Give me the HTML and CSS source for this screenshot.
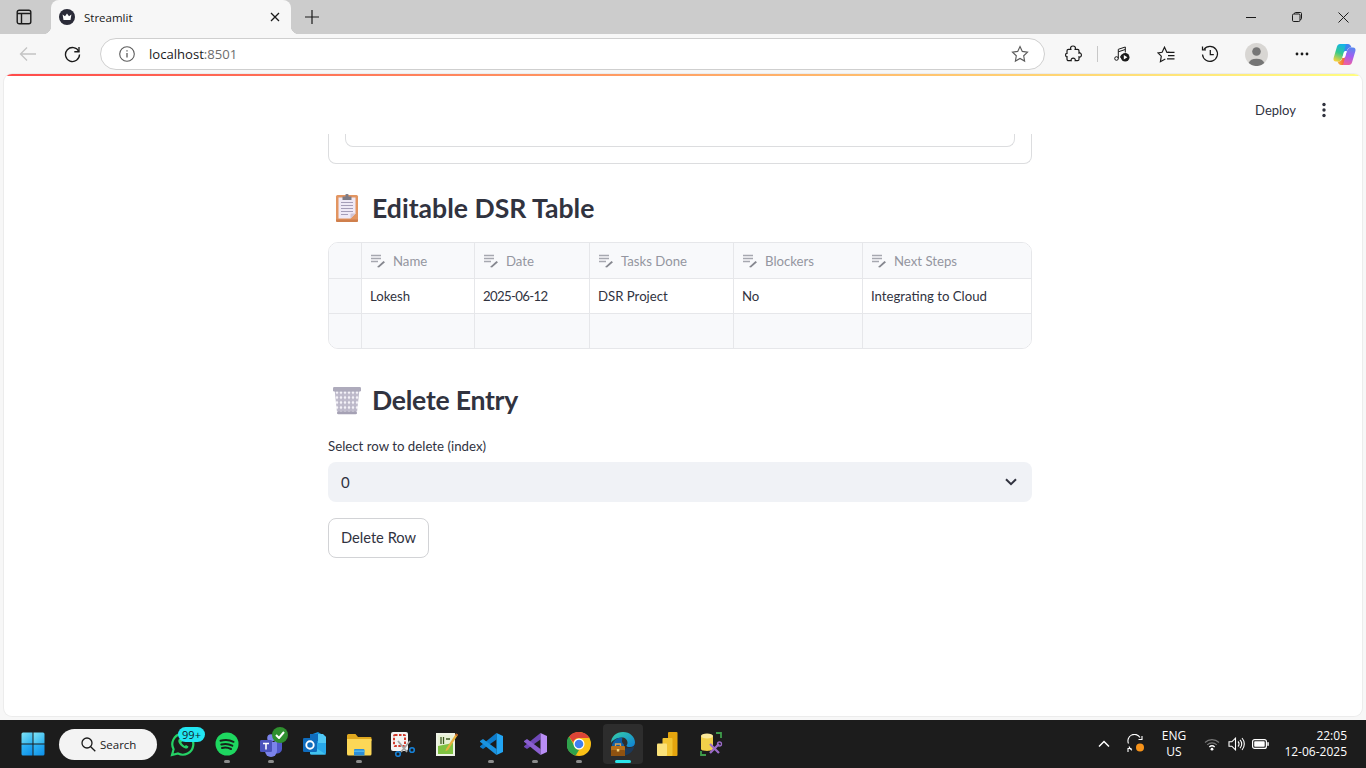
FILE: index.html
```html
<!DOCTYPE html>
<html lang="en">
<head>
<meta charset="utf-8">
<title>Streamlit</title>
<link rel="stylesheet" href="styles.css">
</head>
<body>
<svg class="defs" width="0" height="0" aria-hidden="true">
  <defs>
    <symbol id="edit" viewBox="0 0 16 14">
      <path d="M1 1.500h10M1 4.500h10M1 7.500h7" stroke="#a6a8b0" stroke-width="1.600" fill="none"/>
      <path d="M7 13l6.500-6 1.500 1.300L9 13.600z" fill="#85878f"/>
    </symbol>
  </defs>
</svg>
<div class="tabstrip">
  <div class="slot sidebar-slot">
    <svg width="16" height="16" viewBox="0 0 16 16" fill="none" stroke="#1a1a1a" stroke-width="1.400"><rect x="1.200" y="1.200" width="13.600" height="13.600" rx="2"/><path d="M1.200 4.500h13.600M5.500 4.500v10.300"/></svg>
  </div>
  <div class="tab">
    <svg class="favicon" width="16" height="16" viewBox="0 0 16 16"><circle cx="8" cy="8" r="8" fill="#2a2b38"/><path d="M3.600 5.600l2.400 1.700L8 4.400l2 2.900 2.400-1.700-.9 5.400h-7z" fill="#fff"/></svg>
    <span class="tab-title">Streamlit</span>
    <svg class="tab-close" width="10" height="10" viewBox="0 0 10 10" stroke="#1a1a1a" stroke-width="1.300"><path d="M1 1l8 8M9 1l-8 8"/></svg>
  </div>
  <div class="slot newtab">
    <svg width="14" height="14" viewBox="0 0 14 14" stroke="#1a1a1a" stroke-width="1.200"><path d="M7 0v14M0 7h14"/></svg>
  </div>
  <div class="winctl">
    <div class="ctl"><svg width="10" height="10" viewBox="0 0 10 10" stroke="#1a1a1a"><path d="M0 5.500h10"/></svg></div>
    <div class="ctl"><svg width="10" height="10" viewBox="0 0 10 10" fill="none" stroke="#1a1a1a"><rect x=".5" y="2" width="7.500" height="7.500" rx="1.200"/><path d="M2.500 2V1.500A1 1 0 0 1 3.500.5h5a1 1 0 0 1 1 1v5a1 1 0 0 1-1 1H8"/></svg></div>
    <div class="ctl"><svg width="11" height="11" viewBox="0 0 11 11" stroke="#1a1a1a"><path d="M.5.5l10 10M10.500.5l-10 10"/></svg></div>
  </div>
</div>

<div class="toolbar">
  <div class="slot">
    <svg width="18" height="16" viewBox="0 0 18 16" fill="none" stroke="#c4c4c4" stroke-width="1.300"><path d="M17 8H1.500M8 1.500L1.500 8 8 14.500"/></svg>
  </div>
  <div class="slot">
    <svg width="17" height="17" viewBox="0 0 17 17" fill="none" stroke="#1a1a1a" stroke-width="1.350"><path d="M14.800 5.500A7 7 0 1 0 15.500 8.500"/><path d="M15 1v4.700h-4.700"/></svg>
  </div>
  <div class="urlbar">
    <svg class="info" width="16" height="16" viewBox="0 0 16 16" fill="none" stroke="#5c5c5c" stroke-width="1.100"><circle cx="8" cy="8" r="7.300"/><path d="M8 7v4.600M8 4.200v1.300" stroke-width="1.300"/></svg>
    <span class="url-host">localhost</span><span class="url-port">:8501</span>
    <svg class="star" width="18" height="18" viewBox="0 0 18 18" fill="none" stroke="#5c5c5c" stroke-width="1.150"><path d="M9 1.500l2.300 4.900 5.200.7-3.800 3.700.9 5.300L9 13.500l-4.600 2.600.9-5.300L1.500 7.100l5.200-.7z"/></svg>
  </div>
  <div class="slot ext-slot">
    <svg width="17" height="18" viewBox="0 0 17 18" fill="none" stroke="#1a1a1a" stroke-width="1.200"><path d="M5.800 4.300C5 2.400 6.300 1 8 1s3 1.400 2.200 3.300h2.300c.8 0 1.500.7 1.500 1.500v2.300c1.500-.5 2.400.6 2.400 1.900s-.9 2.400-2.400 1.900v2.300c0 .8-.7 1.500-1.500 1.500h-2.300c.5-1.500-.6-2.600-2-2.600s-2.500 1.100-2 2.600H3.500c-.8 0-1.500-.7-1.500-1.500v-2.500c-.8.200-1.400-.6-1.400-1.700s.6-1.900 1.400-1.700V5.800c0-.8.700-1.500 1.500-1.500z"/></svg>
  </div>
  <div class="tool-sep"></div>
  <div class="slot">
    <svg width="16" height="16" viewBox="0 0 16 16" fill="none" stroke="#1a1a1a" stroke-width="1"><circle cx="2.500" cy="12.500" r="1.800"/><circle cx="8" cy="10.800" r="1.400"/><path d="M4.300 12.500V3.300l7-2.300v5.500M4.300 5.800l7-2.300"/><circle cx="11.200" cy="11.200" r="4.300" fill="#1a1a1a" stroke="none"/><path d="M9.800 9l3.600 2.200-3.600 2.200z" fill="#fff" stroke="none"/></svg>
  </div>
  <div class="slot">
    <svg width="18" height="17" viewBox="0 0 18 17" fill="none" stroke="#1a1a1a" stroke-width="1.150"><path d="M12.500 6.300H9.900L7.500 1.200 5.100 6.300 1 7l3.300 3.200-.9 5.600 4.900-2.700"/><path d="M11 6.300h6.500M11 9.600h6.500M10 12.900h7.500"/></svg>
  </div>
  <div class="slot">
    <svg width="18" height="18" viewBox="0 0 18 18" fill="none" stroke="#1a1a1a" stroke-width="1.250"><path d="M3 4.300A7.500 7.500 0 1 1 1.500 9.500"/><path d="M1.500 1.500v3.300h3.400M9.300 5v4.700h3.500"/></svg>
  </div>
  <div class="slot profile-slot">
    <svg width="23" height="23" viewBox="0 0 23 23"><circle cx="11.500" cy="11.500" r="11.500" fill="#d8d6d3"/><circle cx="11.500" cy="8.500" r="4.300" fill="#767676"/><path d="M3.700 20a8 5.500 0 0 1 15.600 0 11.500 11.500 0 0 1-15.600 0z" fill="#767676"/></svg>
  </div>
  <div class="slot profile-slot">
    <svg width="14" height="4" viewBox="0 0 14 4" fill="#1a1a1a"><circle cx="2" cy="2" r="1.400"/><circle cx="7" cy="2" r="1.400"/><circle cx="12" cy="2" r="1.400"/></svg>
  </div>
  <div class="slot copilot-slot">
    <svg width="23" height="23" viewBox="0 0 23 23">
      <defs>
        <linearGradient id="cpa" x1="0.600" y1="0" x2="0.300" y2="1"><stop offset="0" stop-color="#14b4e8"/><stop offset=".5" stop-color="#34c98c"/><stop offset="1" stop-color="#f4d33c"/></linearGradient>
        <linearGradient id="cpb" x1="0.600" y1="0" x2="0.400" y2="1"><stop offset="0" stop-color="#5a86f0"/><stop offset=".5" stop-color="#a45cf0"/><stop offset="1" stop-color="#f2609c"/></linearGradient>
        <linearGradient id="cpc" x1="0" y1="0" x2="1" y2="0"><stop offset="0" stop-color="#f7c234"/><stop offset=".5" stop-color="#f4703a"/><stop offset="1" stop-color="#ee4a78"/></linearGradient>
        <linearGradient id="cpd" x1="0" y1="0" x2="1" y2="0"><stop offset="0" stop-color="#1499ee"/><stop offset="1" stop-color="#5a78f0"/></linearGradient>
      </defs>
      <path d="M7 1h8c1.500 0 2.500 1 3 2.500l.7 1h-1.200c-2 0-3.500 1.500-4 4.500H8z" fill="url(#cpd)"/>
      <path d="M16 22H8c-1.500 0-2.500-1-3-2.500l-.7-1h1.200c2 0 3.500-1.500 4-4.500h5z" fill="url(#cpc)"/>
      <path d="M7 1h6L9.500 14c-.6 1.800-1.900 4.500-4 4.500H3c-2 0-3-1.600-2.400-3.500L4 3.500C4.500 2 5.500 1 7 1z" fill="url(#cpa)"/>
      <path d="M16 22h-6l3.500-13c.6-1.800 1.900-4.500 4-4.500H20c2 0 3 1.600 2.400 3.500L19 19.500c-.5 1.500-1.500 2.500-3 2.500z" fill="url(#cpb)"/>
      <path d="M11.600 8h2.300L11.500 15H9.200z" fill="#fff"/>
    </svg>
  </div>
</div>

<div class="page">
  <div class="accent"></div>
  <header class="app-header">
    <span class="deploy">Deploy</span>
    <svg class="kebab" width="6" height="16" viewBox="0 0 6 16" fill="#31333f"><circle cx="3" cy="2.500" r="1.700"/><circle cx="3" cy="8" r="1.700"/><circle cx="3" cy="13.500" r="1.700"/></svg>
  </header>
  <main class="main">
    <div class="card-stub"><div class="inner-stub"></div></div>

    <h3 class="section-title first">
      <svg class="emoji" width="30" height="30" viewBox="0 0 30 30">
        <rect x="5" y="2" width="22" height="27" rx="1.500" fill="#e29561"/>
        <path d="M5 26.500h22V27.500a1.500 1.500 0 0 1-1.500 1.500h-19A1.500 1.500 0 0 1 5 27.500z" fill="#cf7f4c"/>
        <path d="M7.500 4.500h17v16l-5 5h-12z" fill="#efe9f6"/>
        <path d="M24.500 20.500l-5 5v-4c0-.6.400-1 1-1z" fill="#cfc4d6"/>
        <path d="M10 9.500h12M10 12.500h12M10 15.500h12M10 18.500h12M10 21.500h7" stroke="#a59db8" stroke-width="1"/>
        <path d="M11.500 7V3.500h3V1.500c0-.8 3-.8 3 0v2h3V7z" fill="#7d7b86"/>
      </svg>
      <span>Editable DSR Table</span>
    </h3>

    <div class="table">
      <div class="cell head idx"></div>
      <div class="cell head"><svg class="edit" width="16" height="14"><use href="#edit"/></svg>Name</div>
      <div class="cell head"><svg class="edit" width="16" height="14"><use href="#edit"/></svg>Date</div>
      <div class="cell head"><svg class="edit" width="16" height="14"><use href="#edit"/></svg>Tasks Done</div>
      <div class="cell head"><svg class="edit" width="16" height="14"><use href="#edit"/></svg>Blockers</div>
      <div class="cell head"><svg class="edit" width="16" height="14"><use href="#edit"/></svg>Next Steps</div>
      <div class="cell idx body"></div>
      <div class="cell body">Lokesh</div>
      <div class="cell body date">2025-06-12</div>
      <div class="cell body">DSR Project</div>
      <div class="cell body">No</div>
      <div class="cell body">Integrating to Cloud</div>
      <div class="cell idx last"></div>
      <div class="cell blank last"></div>
      <div class="cell blank last"></div>
      <div class="cell blank last"></div>
      <div class="cell blank last"></div>
      <div class="cell blank last"></div>
    </div>

    <h3 class="section-title second">
      <svg class="emoji" width="30" height="30" viewBox="0 0 30 30">
        <defs><pattern id="mesh" width="4" height="5" patternUnits="userSpaceOnUse"><rect width="4" height="5" fill="#bdb9ca"/><path d="M2 .5l1.300 2L2 4.500.7 2.500z" fill="#f4f2f8"/></pattern></defs>
        <path d="M3.500 4h25L26 27.500a1.500 1.500 0 0 1-1.500 1.500h-17A1.500 1.500 0 0 1 6 27.500z" fill="url(#mesh)"/>
        <rect x="2" y="2" width="28" height="4.500" rx="1.200" fill="#aeabbc"/>
        <rect x="6" y="26.500" width="20" height="2.800" rx="1.400" fill="#a5a1b4"/>
      </svg>
      <span>Delete Entry</span>
    </h3>

    <label class="field-label">Select row to delete (index)</label>
    <div class="select">
      <span>0</span>
      <svg width="12" height="8" viewBox="0 0 12 8" fill="none" stroke="#31333f" stroke-width="2"><path d="M1 1.200l5 5 5-5"/></svg>
    </div>
    <button class="btn">Delete Row</button>
  </main>
</div>

<div class="page-foot"></div>

<footer class="taskbar">
  <div class="tb-slot win-slot">
    <svg width="24" height="24" viewBox="0 0 24 24">
      <defs>
        <linearGradient id="w1" x1="0" y1="0" x2="1" y2="1"><stop offset="0" stop-color="#7fe3f5"/><stop offset="1" stop-color="#2ab0ef"/></linearGradient>
        <linearGradient id="w2" x1="0" y1="0" x2="1" y2="1"><stop offset="0" stop-color="#32b8f5"/><stop offset="1" stop-color="#0d8ee8"/></linearGradient>
      </defs>
      <path d="M.5 2A1.500 1.500 0 0 1 2 .5h9.500v11H.5z" fill="url(#w1)"/>
      <path d="M12.500.5H22A1.500 1.500 0 0 1 23.500 2v9.500h-11z" fill="url(#w1)"/>
      <path d="M.5 12.500h11v11H2A1.500 1.500 0 0 1 .5 22z" fill="url(#w2)"/>
      <path d="M12.500 12.500h11V22a1.500 1.500 0 0 1-1.500 1.500h-9.500z" fill="url(#w2)"/>
    </svg>
  </div>
  <div class="search-pill">
    <svg width="15" height="15" viewBox="0 0 15 15" fill="none" stroke="#1a1a1a" stroke-width="1.300"><circle cx="6" cy="6" r="5"/><path d="M9.700 9.700l4.600 4.600"/></svg>
    <span>Search</span>
  </div>
  <div class="tb-slot app">
    <svg width="26" height="26" viewBox="0 0 26 26" fill="none"><path d="M2 24l1.600-5.800A10.500 10.500 0 1 1 8 22.500z" stroke="#25d366" stroke-width="2.200"/><path d="M9 8c-1 1-1 3 .5 5s3.500 3.800 6 4.500c1.500.3 2.800-.5 3-2l-2.500-1.500-1.200 1c-1.500-.7-2.700-2-3.500-3.500l1-1.200L11 8z" fill="#25d366"/></svg>
    <span class="badge-count">99+</span>
  </div>
  <div class="tb-slot app running">
    <svg width="24" height="24" viewBox="0 0 24 24" fill="none"><circle cx="12" cy="12" r="11.500" fill="#1ed760"/><path d="M5.500 8.800c4.500-1.300 9-1 13 1M6.300 12.500c3.800-1 7.500-.7 11 1.200M7 16c3-.8 6-.5 9 1" stroke="#16241b" stroke-width="2" stroke-linecap="round"/></svg>
  </div>
  <div class="tb-slot app running">
    <svg width="26" height="26" viewBox="0 0 26 26"><circle cx="19" cy="8.500" r="3" fill="#7b83eb"/><circle cx="13" cy="7" r="3.800" fill="#7b83eb"/><path d="M16 11h7a1 1 0 0 1 1 1v6a4.500 4.500 0 0 1-6.500 4z" fill="#5059c9"/><path d="M7 11h12v9a6 6 0 0 1-12 0z" fill="#7b83eb"/><rect x="2" y="9" width="12" height="12" rx="1.300" fill="#4b53bc"/><path d="M5 11.800h6v1.400H8.800v5.300H7.200v-5.300H5z" fill="#fff"/></svg>
    <span class="badge-check"><svg width="10" height="8" viewBox="0 0 10 8" fill="none" stroke="#fff" stroke-width="2"><path d="M1 4l3 3 5-6"/></svg></span>
  </div>
  <div class="tb-slot app">
    <svg width="26" height="26" viewBox="0 0 26 26"><path d="M8 4l8-3 8 5v6H8z" fill="#1490df"/><path d="M8 3h8v7H8z" fill="#0f6cbd"/><path d="M16 3h5l3 3v6h-8z" fill="#50c8f5"/><path d="M8 12h16v10a1.500 1.500 0 0 1-1.500 1.500h-13A1.500 1.500 0 0 1 8 22z" fill="#28a8ea"/><path d="M8 13l16 10.500H9.500A1.500 1.500 0 0 1 8 22z" fill="#41c2ef"/><rect x="1" y="7" width="14" height="14" rx="1.300" fill="#0f6cbd"/><circle cx="8" cy="14" r="3.700" fill="none" stroke="#fff" stroke-width="1.900"/></svg>
  </div>
  <div class="tb-slot app running">
    <svg width="26" height="24" viewBox="0 0 26 24"><path d="M1 3.500A1.500 1.500 0 0 1 2.500 2h7l2.500 3h12.500A1 1 0 0 1 25.500 6v3H1z" fill="#e0a81f"/><path d="M1 7h24.500v15a1.500 1.500 0 0 1-1.500 1.500H2.500A1.500 1.500 0 0 1 1 22z" fill="#fcd757"/><path d="M8 18a1 1 0 0 1 1-1h8.500a1 1 0 0 1 1 1v5.500H8z" fill="#2b8ed8"/><rect x="8" y="18.500" width="10.500" height="1.500" fill="#4fb6ee"/></svg>
  </div>
  <div class="tb-slot app">
    <svg width="26" height="26" viewBox="0 0 26 26" fill="none"><rect x="1" y="1" width="17" height="19" rx="2" fill="#f4f4f4"/><rect x="4" y="4" width="11" height="11" rx="1" stroke="#d13a2d" stroke-width="2" stroke-dasharray="2.500 1.500"/><path d="M8 10l9 11M20 10l-9 11" stroke="#a5a5a5" stroke-width="1.800"/><circle cx="8" cy="23" r="2.300" stroke="#1680d6" stroke-width="1.600"/><circle cx="22" cy="19" r="2.300" stroke="#1680d6" stroke-width="1.600"/></svg>
  </div>
  <div class="tb-slot app">
    <svg width="24" height="26" viewBox="0 0 24 26"><path d="M1 2h19v23H1z" fill="#eef2e6"/><path d="M3 4h15v19H3z" fill="#7fc241"/><path d="M3 4h15v8L3 15z" fill="#e8f1d5"/><path d="M6 6v7M8.500 6v7M11 8h4" stroke="#3e5a1f" stroke-width="1.300"/><path d="M11 18L21 2.500l2 1.300L13 19l-2.500 1.200z" fill="#e7b23d"/><path d="M21 2.500l2 1.300-1 1.400-2-1.300z" fill="#b95a22"/></svg>
  </div>
  <div class="tb-slot app running">
    <svg width="24" height="24" viewBox="0 0 24 24"><path d="M17.500 1v6.500L4 17l-3-2v-.8z" fill="#0c7bcb"/><path d="M1 9.800V9l3-2 13.500 10v6z" fill="#1a93e0"/><path d="M17.500 1L24 4v16l-6.500 3z" fill="#22a5f3"/></svg>
  </div>
  <div class="tb-slot app running">
    <svg width="24" height="24" viewBox="0 0 24 24"><path d="M17.500 1v6.500L4 17l-3-2v-.8z" fill="#6f48b8"/><path d="M1 9.800V9l3-2 13.500 10v6z" fill="#8a5fd0"/><path d="M17.500 1L24 4v16l-6.500 3z" fill="#b98ef5"/></svg>
  </div>
  <div class="tb-slot app running">
    <svg width="24" height="24" viewBox="0 0 24 24"><circle cx="12" cy="12" r="12" fill="#fbc116"/><path d="M12 0a12 12 0 0 1 10.400 6H12a6 6 0 0 0-5.800 4.500L2 4.500A12 12 0 0 1 12 0z" fill="#db4437"/><path d="M2 4.500l5.300 9.200A6 6 0 0 0 12 18l-3.300 5.600A12 12 0 0 1 2 4.500z" fill="#2fa24c"/><circle cx="12" cy="12" r="5.500" fill="#fff"/><circle cx="12" cy="12" r="4.300" fill="#3f7ff0"/></svg>
  </div>
  <div class="tb-slot app active">
    <svg width="26" height="26" viewBox="0 0 26 26">
      <defs><linearGradient id="edg" x1="0" y1="0" x2="1" y2="1"><stop offset="0" stop-color="#36d1a8"/><stop offset="1" stop-color="#0e7fd6"/></linearGradient></defs>
      <path d="M1 12C1 5.500 6.500 1 13 1c7 0 12 5 12 10.500 0 3-2.200 4.500-5 4.500-2 0-3.500-.5-3.500-1.500 0-.5 1-1 1-2.800C17.500 8.500 15 6.500 12 6.500 6.500 6.500 2.500 9.500 1 12z" fill="url(#edg)"/>
      <path d="M12 6.500c-5 0-9 3-10 7.500 0 3 1 5 2 6h10v-6c0-1-2.500-2-2-4.500.2-1 .500-2.500 0-3z" fill="#0c5fa8"/>
      <path d="M18 17c2.500 0 5-.5 6.500-2-1 5.500-6 9.500-11 9.500V18z" fill="#1b3a5c"/>
      <rect x="1" y="15" width="14" height="10" rx="1" fill="#b76f1a"/>
      <rect x="1" y="19" width="14" height="6" rx="1" fill="#8f5210"/>
      <path d="M5.500 15v-2h5v2" fill="none" stroke="#d9a35a" stroke-width="1.300"/>
      <rect x="6.800" y="18" width="2.500" height="2.500" fill="#f5d27a"/>
    </svg>
    <span class="active-bar"></span>
  </div>
  <div class="tb-slot app">
    <svg width="22" height="26" viewBox="0 0 22 26"><rect x="12" y="1" width="9.500" height="24" rx="1" fill="#e5a50e"/><rect x="6.500" y="7" width="10" height="18" rx="1" fill="#f2c431"/><rect x="1" y="12.500" width="10" height="12.500" rx="1" fill="#fbe27a"/></svg>
  </div>
  <div class="tb-slot app">
    <svg width="24" height="26" viewBox="0 0 24 26" fill="none"><path d="M2 6c0-4 12-4 12 0v12c0 2.500-12 2.500-12 0z" fill="#f2d04a"/><ellipse cx="8" cy="5" rx="6" ry="2.500" fill="#fbe99a"/><path d="M17 2h5v5M2 20v4h5" stroke="#3f9c4b" stroke-width="1.800"/><path d="M11 22l9-9M20 22l-9-9" stroke="#9b6bc8" stroke-width="2.300"/><circle cx="20.500" cy="13" r="2" stroke="#9b6bc8" stroke-width="1.300"/></svg>
  </div>
  <div class="tray">
    <div class="tray-chev"><svg width="12" height="8" viewBox="0 0 12 8" fill="none" stroke="#fff" stroke-width="1.500"><path d="M1 6.500l5-5 5 5"/></svg></div>
    <div class="tray-sync">
      <svg width="20" height="20" viewBox="0 0 20 20" fill="none" stroke="#fff" stroke-width="1.100"><path d="M2.500 9.500A6.500 6.500 0 0 1 14 3.500M16 2v3.500h-3.500M3 12.500c.5 1.500 1.500 3 3 3.700M2 18v-3.500h3.500"/><circle cx="14" cy="13.500" r="4" fill="#f7931a" stroke="none"/></svg>
    </div>
    <div class="tray-lang"><span>ENG</span><span>US</span></div>
    <div class="tray-ico">
      <svg width="16" height="13" viewBox="0 0 16 13" fill="none" stroke="#777" stroke-width="1.100"><path d="M1 4.500a10 10 0 0 1 14 0M3.200 6.800a7 7 0 0 1 9.600 0"/><path d="M5.300 9a4 4 0 0 1 5.400 0" stroke="#fff" stroke-width="1.300"/><circle cx="8" cy="11.200" r="1.400" fill="#fff" stroke="none"/></svg>
    </div>
    <div class="tray-ico">
      <svg width="17" height="14" viewBox="0 0 17 14" fill="none" stroke="#fff" stroke-width="1.100"><path d="M1 4.800h2.800L7.500 1.200v11.600L3.800 9.200H1zM10 4.500a3.500 3.500 0 0 1 0 5M12 2.800a6 6 0 0 1 0 8.400M14 1a9 9 0 0 1 0 12"/></svg>
    </div>
    <div class="tray-ico batt">
      <svg width="17" height="10" viewBox="0 0 17 10" fill="none"><rect x=".6" y=".6" width="13.800" height="8.800" rx="2" stroke="#fff" stroke-width="1.200"/><rect x="2.200" y="2.200" width="10.500" height="5.600" rx=".8" fill="#fff"/><rect x="15.300" y="3.200" width="1.500" height="3.600" fill="#fff"/></svg>
    </div>
    <div class="clock"><span>22:05</span><span>12-06-2025</span></div>
  </div>
</footer>
</body>
</html>
```
FILE: styles.css
```css
* { box-sizing: border-box; }
html, body { margin: 0; padding: 0; }
body {
  width: 1366px;
  height: 768px;
  overflow: hidden;
  background: #f7f7f7;
  display: flex;
  flex-direction: column;
  font-family: "Lato", "Liberation Sans", sans-serif;
  color: #31333f;
}
.defs { position: absolute; }

.slot { width: 44px; display: flex; align-items: center; justify-content: center; flex: none; }

/* Tab strip */
.tabstrip { height: 34px; background: #cccccc; display: flex; flex: none; }
.sidebar-slot { margin-left: 2px; }
.tab {
  position: relative;
  width: 240px;
  margin-left: 5px;
  background: #f7f7f7;
  border-radius: 8px 8px 0 0;
  display: flex;
  align-items: center;
  padding: 0 11px 0 8px;
}
.tab::before, .tab::after {
  content: "";
  position: absolute;
  bottom: 0;
  width: 8px;
  height: 8px;
}
.tab::before { left: -8px; background: radial-gradient(circle at 0 0, #cccccc 8px, #f7f7f7 8.500px); }
.tab::after { right: -8px; background: radial-gradient(circle at 100% 0, #cccccc 8px, #f7f7f7 8.500px); }
.favicon { flex: none; }
.tab-title { margin-left: 9px; font: 11.500px "Open Sans", sans-serif; color: #1a1a1a; }
.tab-close { margin-left: auto; }
.newtab { margin-left: -1px; width: 44px; }
.winctl { margin-left: auto; display: flex; }
.ctl { width: 46px; display: flex; align-items: center; justify-content: center; }

/* Toolbar */
.toolbar { height: 40px; flex: none; display: flex; padding-left: 6px; padding-bottom: 0; }
.urlbar {
  width: 945px;
  height: 32px;
  margin: 4px 6px 0 6px;
  background: #fff;
  border: 1px solid #cfcfcf;
  border-radius: 16px;
  display: flex;
  align-items: center;
  padding-left: 18px;
  font: 13.100px "Open Sans", sans-serif;
}
.info { margin-right: 14px; }
.url-host { color: #1a1a1a; }
.url-port { color: #6d6d6d; }
.star { margin-left: auto; margin-right: 15px; }
.tool-sep { width: 5px; position: relative; flex: none; }
.tool-sep::after { content: ""; position: absolute; left: 2px; top: 12px; width: 1px; height: 16px; background: #c8c8c8; }
.profile-slot { margin-left: 2px; }
.copilot-slot { width: 40px; }

/* Page */
.page {
  height: 642px;
  flex: none;
  margin: 0 4px;
  background: #fff;
  border-radius: 8px;
  overflow: hidden;
  box-shadow: 0 0 0 1px #ececec;
}
.accent { height: 2px; background: linear-gradient(to right, #ff4b4b, #fffd80); }
.app-header {
  height: 58px;
  display: flex;
  align-items: center;
  justify-content: flex-end;
  padding: 10px 35px 0 0;
}
.deploy { font-size: 13px; margin-right: 25px; }
.main { width: 704px; margin-left: 324px; }
.card-stub {
  height: 30px;
  border: 1px solid #dcdddf;
  border-top: 0;
  border-radius: 0 0 8px 8px;
  padding: 0 16px;
}
.inner-stub {
  height: 13px;
  border: 1px solid #dcdddf;
  border-top: 0;
  border-radius: 0 0 8px 8px;
}
.section-title {
  margin: 0;
  height: 36px;
  display: flex;
  align-items: center;
  font-size: 26.600px;
  font-weight: 700;
  line-height: 36px;
  color: #31333f;
}
.section-title.first { margin-top: 26px; margin-bottom: 16px; }
.section-title.second { margin-top: 33px; letter-spacing: -.25px; }
.emoji { margin: 0 11px 0 3px; flex: none; }

/* Table */
.table {
  display: grid;
  grid-template-columns: 32px 113px 115px 144px 129px 169px;
  grid-template-rows: 36px 35px 34px;
  border: 1px solid #e6e7ea;
  border-radius: 10px;
  overflow: hidden;
  font-size: 13.200px;
}
.cell {
  display: flex;
  align-items: center;
  padding: 0 8px;
  border-left: 1px solid #e6e7ea;
  border-bottom: 1px solid #e6e7ea;
  background: #fff;
  white-space: nowrap;
}
.cell.idx { border-left: 0; background: #f8f9fb; }
.cell.last { border-bottom: 0; }
.cell.head { background: #f8f9fb; color: #9496a0; }
.cell.blank { background: #f8f9fb; }
.cell.date { letter-spacing: -.65px; }
.edit { margin-right: 7px; flex: none; }

/* Form */
.field-label { display: block; margin-top: 18px; height: 20px; line-height: 20px; font-size: 13.250px; }
.select {
  margin-top: 6px;
  height: 40px;
  background: #f0f2f6;
  border-radius: 8px;
  display: flex;
  align-items: center;
  justify-content: space-between;
  padding: 0 15px 0 13px;
  font-size: 15px;
}
.btn {
  display: block;
  margin-top: 16px;
  width: 101px;
  height: 40px;
  background: #fff;
  border: 1px solid #d2d3d6;
  border-radius: 8px;
  font: 14.700px "Lato", sans-serif;
  color: #31333f;
  padding: 0 0 3px;
}

.page-foot { height: 4px; flex: none; }

/* Taskbar */
.taskbar {
  height: 48px;
  flex: none;
  background: #1c1c1c;
  display: flex;
  align-items: center;
  padding-left: 11px;
  color: #fff;
}
.tb-slot { position: relative; width: 44px; height: 40px; display: flex; align-items: center; justify-content: center; flex: none; }
.search-pill {
  width: 98px;
  height: 31px;
  margin: 0 4px;
  background: #f3f3f3;
  border-radius: 16px;
  display: flex;
  align-items: center;
  padding-left: 22px;
  gap: 4px;
  font: 11.500px "Open Sans", sans-serif;
  color: #1a1a1a;
}
.app.running::after {
  content: "";
  position: absolute;
  left: 19px;
  bottom: 1px;
  width: 6px;
  height: 3px;
  border-radius: 2px;
  background: #8c8c8c;
}
.app.active { width: 40px; margin: 0 2px; background: #2d2d2d; border-radius: 4px; }
.active-bar {
  position: absolute;
  left: 12px;
  bottom: 1px;
  width: 16px;
  height: 3px;
  border-radius: 2px;
  background: #2be4ea;
}
.badge-count {
  position: absolute;
  left: 17px;
  top: 3px;
  width: 27px;
  height: 15px;
  border-radius: 8px;
  background: #22e6f2;
  color: #10202a;
  font: 11px/15px "Open Sans", sans-serif;
  text-align: center;
}
.badge-check {
  position: absolute;
  left: 23px;
  top: 3px;
  width: 16px;
  height: 16px;
  border-radius: 50%;
  background: #2f8f2f;
  display: flex;
  align-items: center;
  justify-content: center;
}
.tray { margin-left: auto; display: flex; align-items: center; padding-right: 19px; font: 12px "Open Sans", sans-serif; }
.tray-chev { width: 24px; margin-right: 8px; display: flex; justify-content: center; }
.tray-sync { width: 24px; margin-right: 6px; display: flex; justify-content: center; }
.tray-lang { width: 40px; display: flex; flex-direction: column; align-items: center; line-height: 16px; margin-right: 6px; }
.tray-ico { width: 24px; display: flex; justify-content: center; }
.tray-ico.batt { margin-right: 5px; }
.clock { width: 70px; display: flex; flex-direction: column; align-items: flex-end; line-height: 16px; }
```
